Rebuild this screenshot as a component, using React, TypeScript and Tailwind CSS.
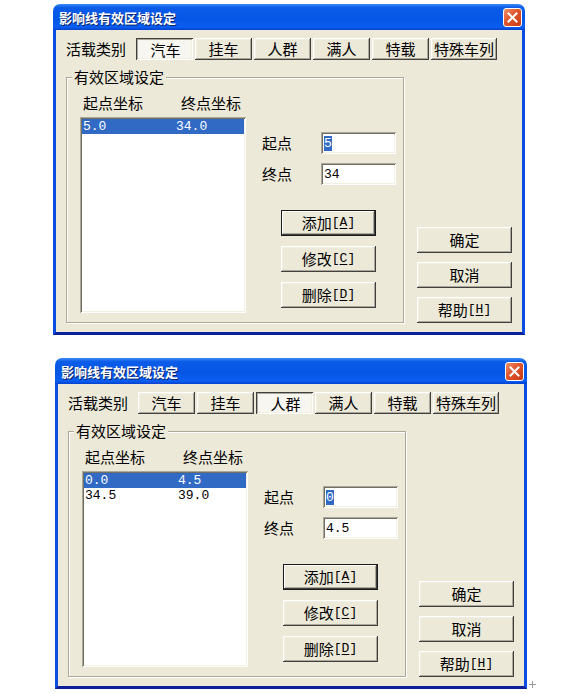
import React from "react";

const raised =
  "bg-[#ece9d8] shadow-[inset_-1px_-1px_0_#404040,inset_1px_1px_0_#ffffff,inset_-2px_-2px_0_#aca899,inset_2px_2px_0_#f1efe2]";
const pressed =
  "bg-[#f7f6f0] shadow-[inset_1px_1px_0_#404040,inset_-1px_-1px_0_#ffffff,inset_2px_2px_0_#aca899,inset_-2px_-2px_0_#f1efe2]";
const sunken =
  "bg-white shadow-[inset_1px_1px_0_#aca899,inset_-1px_-1px_0_#ffffff,inset_2px_2px_0_#716f64,inset_-2px_-2px_0_#f1efe2]";
const defBtn =
  "bg-[#ece9d8] border border-[#1a1a1a] shadow-[inset_-1px_-1px_0_#404040,inset_1px_1px_0_#ffffff,inset_-2px_-2px_0_#aca899]";

const CJK = "font-['Noto_Sans_CJK_SC',sans-serif]";
const MONO = "font-['Liberation_Mono','Noto_Sans_CJK_SC',monospace]";

const tabs: [string, string][] = [
  ["汽车", "w-[57px]"],
  ["挂车", "w-[57px]"],
  ["人群", "w-[57px]"],
  ["满人", "w-[57px]"],
  ["特载", "w-[57px]"],
  ["特殊车列", "w-[66px]"],
];

function Accel({ text, key1 }: { text: string; key1: string }) {
  return (
    <span className="flex items-center">
      <span className={`${CJK} text-[15px] leading-[20px]`}>{text}</span>
      <span className={`${MONO} text-[13px] leading-[20px]`}>
        [<span className="underline underline-offset-2">{key1}</span>]
      </span>
    </span>
  );
}

function CloseBtn() {
  return (
    <div className="w-[19px] h-[19px] rounded-[3px] border border-white bg-[linear-gradient(135deg,#f0906c_0%,#e0552b_45%,#c83a14_100%)] flex items-center justify-center">
      <svg width="11" height="11" viewBox="0 0 11 11">
        <path d="M1.5 1.5 L9.5 9.5 M9.5 1.5 L1.5 9.5" stroke="#ffffff" strokeWidth="2" strokeLinecap="square" />
      </svg>
    </div>
  );
}

function Dialog({
  sel,
  rows,
  start,
  end,
  className,
}: {
  sel: number;
  rows: [string, string][];
  start: string;
  end: string;
  className: string;
}) {
  return (
    <div className={`w-[472px] flex flex-col ${className}`}>
      <div className="h-[26px] rounded-t-[7px] bg-[linear-gradient(to_bottom,#3d8cf7_0%,#0a5ce8_14%,#0656e6_60%,#0a5ef0_88%,#0342cf_100%)] flex items-center justify-between pl-[6px] pr-[3px]">
        <span className={`${CJK} text-white text-[13px] font-bold leading-none [text-shadow:1px_1px_0_#0a246a]`}>
          影响线有效区域设定
        </span>
        <CloseBtn />
      </div>
      <div className="h-[305px] flex flex-col border-x-[3px] border-b-[3px] border-x-[#0b4de0] border-b-[#0a2299] bg-[#ece9d8] text-black">
        {/* tab row */}
        <div className="flex items-center h-[22px] mt-[8px] pl-[10px]">
          <span className={`${CJK} text-[15px] leading-[20px] w-[60px] mr-[10px]`}>活载类别</span>
          <div className="flex gap-[2px]">
            {tabs.map(([t, w], i) => (
              <div
                key={t}
                className={`${w} h-[22px] flex items-center justify-center ${i === sel ? pressed : raised}`}
              >
                <span className={`${CJK} text-[15px] leading-[20px] ${i === sel ? "translate-x-[1px] translate-y-[1px]" : ""}`}>
                  {t}
                </span>
              </div>
            ))}
          </div>
        </div>

        {/* main row */}
        <div className="flex mt-[17px] pl-[10px]">
          <div className="relative w-[338px] h-[246px] border border-[#aca899] shadow-[inset_1px_1px_0_#ffffff,1px_1px_0_#ffffff]">
            <span className={`${CJK} absolute -top-[11px] left-[5px] px-[2px] bg-[#ece9d8] text-[15px] leading-[20px]`}>
              有效区域设定
            </span>
            <div className="flex">
              <div className="ml-[13px] mt-[15px] flex flex-col">
                <div className={`${CJK} flex h-[20px] text-[15px] leading-[20px]`}>
                  <span className="pl-[3px] w-[101px]">起点坐标</span>
                  <span>终点坐标</span>
                </div>
                <div className={`mt-[4px] w-[166px] h-[196px] p-[2px] ${sunken}`}>
                  {rows.map(([a, b], i) => (
                    <div
                      key={i}
                      className={`${MONO} flex h-[15px] text-[13px] leading-[15px] ${i === 0 ? "bg-[#316ac5] text-white" : "text-black"}`}
                    >
                      <span className="pl-[1px] w-[94px]">{a}</span>
                      <span>{b}</span>
                    </div>
                  ))}
                </div>
              </div>
              <div className="ml-[16px] mt-[54px] flex flex-col">
                <div className="flex items-center h-[22px]">
                  <span className={`${CJK} w-[59px] text-[15px] leading-[20px]`}>起点</span>
                  <div className={`w-[75px] h-[22px] pl-[3px] flex items-center ${sunken}`}>
                    <span className={`${MONO} text-[13px] leading-[15px] bg-[#316ac5] text-white`}>{start}</span>
                  </div>
                </div>
                <div className="flex items-center h-[22px] mt-[9px]">
                  <span className={`${CJK} w-[59px] text-[15px] leading-[20px]`}>终点</span>
                  <div className={`w-[75px] h-[22px] pl-[3px] flex items-center ${sunken}`}>
                    <span className={`${MONO} text-[13px] leading-[15px]`}>{end}</span>
                  </div>
                </div>
                <div className="flex flex-col gap-[10px] mt-[25px] ml-[19px]">
                  <div className={`w-[95px] h-[26px] flex items-center justify-center ${defBtn}`}>
                    <Accel text="添加" key1="A" />
                  </div>
                  <div className={`w-[95px] h-[26px] flex items-center justify-center ${raised}`}>
                    <Accel text="修改" key1="C" />
                  </div>
                  <div className={`w-[95px] h-[26px] flex items-center justify-center ${raised}`}>
                    <Accel text="删除" key1="D" />
                  </div>
                </div>
              </div>
            </div>
          </div>
          <div className="ml-[13px] flex flex-col justify-end gap-[9px]">
            <div className={`w-[95px] h-[26px] flex items-center justify-center ${raised}`}>
              <span className={`${CJK} text-[15px] leading-[20px]`}>确定</span>
            </div>
            <div className={`w-[95px] h-[26px] flex items-center justify-center ${raised}`}>
              <span className={`${CJK} text-[15px] leading-[20px]`}>取消</span>
            </div>
            <div className={`w-[95px] h-[26px] flex items-center justify-center ${raised}`}>
              <Accel text="帮助" key1="H" />
            </div>
          </div>
        </div>
      </div>
    </div>
  );
}

export default function App() {
  return (
    <div className="w-[561px] h-[694px] bg-white overflow-hidden flex flex-col">
      <Dialog
        className="ml-[53px] mt-[4px]"
        sel={0}
        rows={[["5.0", "34.0"]]}
        start="5"
        end="34"
      />
      <div className="flex items-end mt-[23px] ml-[55px]">
        <Dialog
          className=""
          sel={2}
          rows={[
            ["0.0", "4.5"],
            ["34.5", "39.0"],
          ]}
          start="0"
          end="4.5"
        />
        <svg width="7" height="7" viewBox="0 0 7 7" className="ml-[2px] mb-[1px]">
          <path d="M3.5 0 V7 M0 3.5 H7" stroke="#9a9a9a" strokeWidth="1" />
        </svg>
      </div>
    </div>
  );
}
